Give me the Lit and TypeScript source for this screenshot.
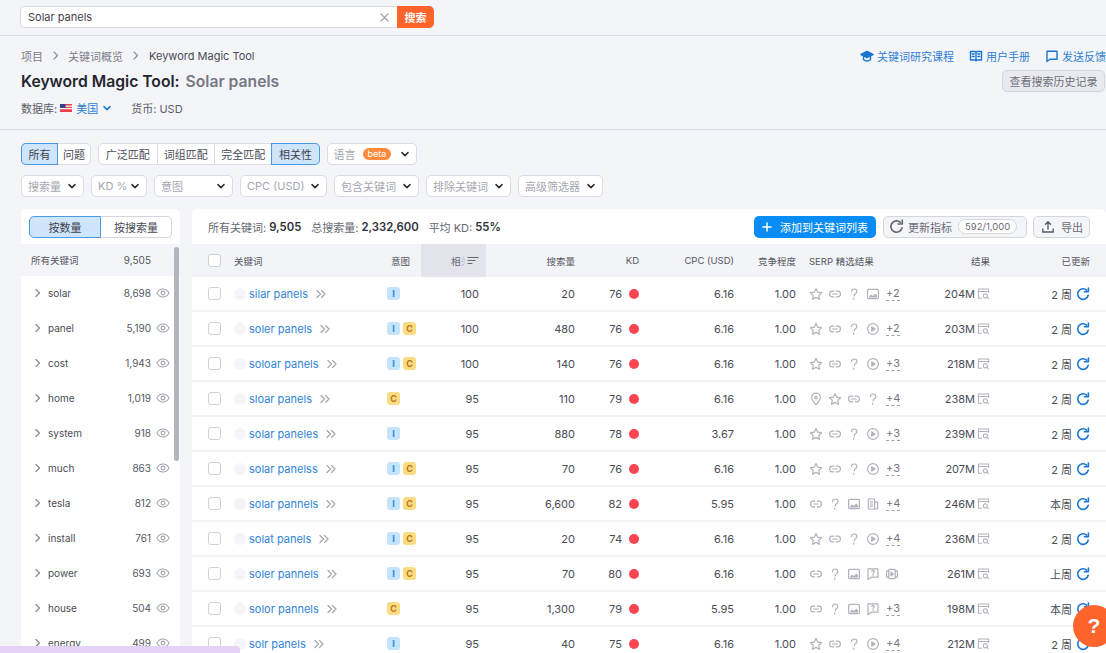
import { LitElement, html, css, svg, nothing } from "lit";
import { customElement } from "lit/decorators.js";

const ICONS: Record<string, unknown> = {
  star: svg`<path d="M7 1.600l1.700 3.600 3.900.5-2.900 2.700.8 3.900L7 10.400l-3.500 1.900.8-3.900L1.400 5.700l3.900-.5z"/>`,
  link: svg`<path d="M5.800 4.200H4.400a2.800 2.800 0 000 5.600h1.400M8.200 4.200h1.400a2.800 2.800 0 010 5.600H8.200M4.600 7h4.800"/>`,
  q: svg`<path d="M4.400 4.600C4.600 3 5.700 2 7.200 2c1.600 0 2.700 1 2.700 2.400 0 1.200-.7 1.800-1.500 2.400-.8.600-1.200 1.100-1.200 2.200M6.700 11.200v1"/>`,
  image: svg`<rect x="1.600" y="2.400" width="10.800" height="9.200" rx="1"/><path d="M3 10.400h8V8.400L9.200 6.600 7 9 5 7.600 3 9.400z" fill="#b0b2bc" stroke="none"/>`,
  play: svg`<circle cx="7" cy="7" r="5.400"/><path d="M5.800 4.900L9 7l-3.200 2.100z" fill="#b0b2bc"/>`,
  pin: svg`<path d="M7 12.800C5 10.500 2.600 8.200 2.600 5.600a4.400 4.400 0 018.800 0c0 2.600-2.400 4.900-4.400 7.200z"/><circle cx="7" cy="5.600" r="1.300"/>`,
  doc: svg`<path d="M2.400 2h6.200v10H3.400a1 1 0 01-1-1zM8.600 5.200h3v5.800a1 1 0 01-1 1H8.600M4.400 4.800h2.200M4.400 7h2.200M4.400 9.200h2.200"/>`,
  chat: svg`<path d="M2 1.800h10v8.400H5.200L2 12.600z"/><path d="M5.800 4.400c.2-.6.7-1 1.300-1 .7 0 1.200.4 1.200 1 0 .9-1.200 1-1.200 2M7.100 7.600v.7"/>`,
  video: svg`<rect x="3.800" y="2.400" width="6.400" height="9.200" rx="1"/><path d="M3.800 3.600H2.600a1 1 0 00-1 1v4.800a1 1 0 001 1h1.200M10.200 3.600h1.200a1 1 0 011 1v4.800a1 1 0 01-1 1h-1.200"/><path d="M6 5.200L8.400 7 6 8.800z" fill="#b0b2bc"/>`,
};

const serpIcon = (n: string) =>
  html`<svg class="si" viewBox="0 0 14 14">${ICONS[n]}</svg>`;

const refresh = (cls: string) => html`<svg class=${cls} viewBox="0 0 14 14"><path d="M12.200 8.200A5.300 5.300 0 1110.600 3.100"/><path d="M8.400 4.700h4V1"/></svg>`;
const chev = (cls = "chev") => html`<svg class=${cls} viewBox="0 0 10 10"><path d="M2 3.600L5 6.600l3-3"/></svg>`;
const eye = () => html`<svg class="eye" viewBox="0 0 14 14"><path d="M.9 7C2.400 4.400 4.500 3 7 3s4.600 1.400 6.100 4C11.600 9.600 9.500 11 7 11S2.400 9.600.9 7z"/><circle cx="7" cy="7" r="1.900"/></svg>`;

interface Row { k: string; i: string; rel: number; vol: string; kd: number; cpc: string; serp: string[]; more: string; res: string; up: string; }

const ROWS: Row[] = [
  { k: "silar panels", i: "I", rel: 100, vol: "20", kd: 76, cpc: "6.16", serp: ["star", "link", "q", "image"], more: "+2", res: "204M", up: "2 周" },
  { k: "soler panels", i: "IC", rel: 100, vol: "480", kd: 76, cpc: "6.16", serp: ["star", "link", "q", "play"], more: "+2", res: "203M", up: "2 周" },
  { k: "soloar panels", i: "IC", rel: 100, vol: "140", kd: 76, cpc: "6.16", serp: ["star", "link", "q", "play"], more: "+3", res: "218M", up: "2 周" },
  { k: "sloar panels", i: "C", rel: 95, vol: "110", kd: 79, cpc: "6.16", serp: ["pin", "star", "link", "q"], more: "+4", res: "238M", up: "2 周" },
  { k: "solar paneles", i: "I", rel: 95, vol: "880", kd: 78, cpc: "3.67", serp: ["star", "link", "q", "play"], more: "+3", res: "239M", up: "2 周" },
  { k: "solar panelss", i: "IC", rel: 95, vol: "70", kd: 76, cpc: "6.16", serp: ["star", "link", "q", "play"], more: "+3", res: "207M", up: "2 周" },
  { k: "solar pannels", i: "IC", rel: 95, vol: "6,600", kd: 82, cpc: "5.95", serp: ["link", "q", "image", "doc"], more: "+4", res: "246M", up: "本周" },
  { k: "solat panels", i: "IC", rel: 95, vol: "20", kd: 74, cpc: "6.16", serp: ["star", "link", "q", "play"], more: "+4", res: "236M", up: "2 周" },
  { k: "soler pannels", i: "IC", rel: 95, vol: "70", kd: 80, cpc: "6.16", serp: ["link", "q", "image", "chat", "video"], more: "", res: "261M", up: "上周" },
  { k: "solor pannels", i: "C", rel: 95, vol: "1,300", kd: 79, cpc: "5.95", serp: ["link", "q", "image", "chat"], more: "+3", res: "198M", up: "本周" },
  { k: "solr panels", i: "I", rel: 95, vol: "40", kd: 75, cpc: "6.16", serp: ["star", "link", "q", "play"], more: "+4", res: "212M", up: "2 周" },
];

const GROUPS: [string, string][] = [
  ["solar", "8,698"], ["panel", "5,190"], ["cost", "1,943"], ["home", "1,019"], ["system", "918"], ["much", "863"],
  ["tesla", "812"], ["install", "761"], ["power", "693"], ["house", "504"], ["energy", "499"],
];

const FILTERS: [string, number][] = [
  ["搜索量", 63], ["KD %", 56], ["意图", 79], ["CPC (USD)", 87], ["包含关键词", 85], ["排除关键词", 85], ["高级筛选器", 85],
];

@customElement("app-root")
export class AppRoot extends LitElement {
  static styles = css`
    :host {
      display: block; position: relative; height: 653px; overflow: hidden;
      background: #f4f5f9; color: #3f414b;
      font-family: Inter, "Noto Sans CJK SC", sans-serif; font-size: 11px;
    }
    svg { display: block; flex: none; fill: none; stroke-linecap: round; stroke-linejoin: round; }

    .top { height: 36px; box-sizing: border-box; padding: 6px 0 0 20px; border-bottom: 1px solid #dfe0e6; display: flex; align-items: flex-start; }
    .search { width: 377px; height: 22px; box-sizing: border-box; background: #fff; border: 1px solid #d9dae1; border-right: 0; border-radius: 5px 0 0 5px; display: flex; align-items: center; justify-content: space-between; padding: 0 8px 0 7px; font-size: 11px; color: #3f414b; }
    .x { width: 9px; height: 9px; stroke: #9a9ca6; stroke-width: 1.400; }
    .go { width: 37px; height: 22px; background: #ff642d; color: #fff; border-radius: 0 5px 5px 0; display: flex; align-items: center; justify-content: center; font-weight: 600; font-size: 11px; }

    .head { height: 94px; box-sizing: border-box; border-bottom: 1px solid #dcdde3; padding: 12px 0 0 21px; display: flex; justify-content: space-between; }
    .crumbs { display: flex; align-items: center; gap: 9px; height: 15px; color: #7d7f8a; font-size: 11px; }
    .crumbs b { font-weight: 400; color: #4a4c56; margin-left: 1px; }
    .sep { width: 7px; height: 9px; stroke: #8b8d97; stroke-width: 1.100; }
    h1 { margin: 9px 0 0; font-size: 15.700px; font-weight: 600; line-height: 20px; color: #24262e; display: flex; gap: 6px; }
    h1 span { color: #767883; }
    .db { margin-top: 8px; display: flex; align-items: center; height: 15px; font-size: 11px; color: #5a5c66; }
    .flag { width: 12px; height: 8px; margin: 0 4px 0 3px; }
    .db a { color: #2b7fd3; }
    .blue-chev { width: 10px; height: 10px; stroke: #1a76d2; stroke-width: 1.500; margin: 0 19px 0 4px; }
    .hr { display: flex; flex-direction: column; align-items: flex-end; }
    .links { display: flex; height: 15px; align-items: center; font-size: 11px; color: #2e80d2; }
    .links span { display: flex; align-items: center; gap: 3px; margin-left: 15px; white-space: nowrap; }
    .li { width: 14px; height: 14px; stroke: #1a76d2; stroke-width: 1.400; }
    .hist { margin: 7px 1px 0 0; width: 103px; height: 22px; box-sizing: border-box; border: 1px solid #d5d6dd; border-radius: 5px; background: #e9eaef; color: #6c6e79; display: flex; align-items: center; justify-content: center; font-size: 11px; }

    .filters { padding: 13px 0 12px 21px; display: flex; flex-direction: column; gap: 10px; }
    .fr { display: flex; height: 22px; }
    .seg { display: flex; background: #fff; border: 1px solid #dcdde3; border-radius: 5px; box-sizing: border-box; margin-right: 7px; }
    .seg span { display: flex; align-items: center; justify-content: center; box-sizing: border-box; border-left: 1px solid #dcdde3; font-size: 11px; color: #4a4c56; }
    .seg span:first-child { border-left: 0; border-radius: 4px 0 0 4px; }
    .seg span:last-child { border-radius: 0 4px 4px 0; }
    .seg span.on { background: #cfe5fb; box-shadow: 0 0 0 1px #4a9ae3; position: relative; color: #3f414b; }
    .w35 { width: 35px; } .w34 { width: 33px; } .w58 { width: 57.500px; } .w47 { width: 47px; }
    .dd { height: 22px; box-sizing: border-box; background: #fff; border: 1px solid #dcdde3; border-radius: 5px; display: flex; align-items: center; justify-content: space-between; padding: 0 6px; color: #a5a7b1; font-size: 11px; margin-right: 7px; white-space: nowrap; }
    .dd svg { width: 10px; height: 10px; stroke: #2a2c34; stroke-width: 1.500; }
    .w90 { width: 90px; }
    .beta { background: #ff8a3c; color: #fff; border-radius: 7px; padding: 0 5px; font-size: 9px; line-height: 12px; margin-left: 7px; margin-right: auto; }

    .main { display: grid; grid-template-columns: 159px 914px; column-gap: 12px; padding-left: 21px; }
    .side { background: #fff; border-radius: 5px 5px 0 0; position: relative; height: 444px; overflow: hidden; }
    .tog { display: flex; padding: 7px 8px 6px; }
    .tog span { flex: 1; height: 22px; box-sizing: border-box; display: flex; align-items: center; justify-content: center; font-size: 11px; border: 1px solid #d5d6dd; color: #4a4c56; }
    .tog span:first-child { background: #cfe5fb; border-color: #4a9ae3; border-radius: 5px 0 0 5px; color: #3f414b; }
    .tog span:last-child { border-left: 0; border-radius: 0 5px 5px 0; }
    .sh, .sr { display: grid; grid-template-columns: 1fr 40px; align-items: center; padding-right: 29px; font-size: 10px; }
    .sh { height: 32px; background: #f4f5f9; padding-left: 10px; color: #55575f; font-size: 9.500px; margin-bottom: -1px; }
    .sh b, .sr b { font-weight: 400; text-align: right; font-size: 10px; color: #55575f; }
    .sr { height: 35px; padding-left: 12px; grid-template-columns: 15px 1fr 40px; position: relative; color: #4a4c56; }
    .sc { width: 9px; height: 10px; stroke: #8b8d97; stroke-width: 1.300; }
    .eye { position: absolute; right: 10px; top: 11px; width: 14px; height: 14px; stroke: #a3a5af; stroke-width: 1.100; }
    .thumb { position: absolute; left: 153px; top: 38px; width: 5px; height: 214px; background: #b4b5bb; border-radius: 3px; }

    .panel { background: #fff; border-radius: 5px 5px 0 0; height: 444px; overflow: hidden; }
    .sum { height: 35px; display: flex; align-items: center; padding: 0 16px; font-size: 11px; color: #666873; }
    .sum b { color: #2f3139; font-weight: 600; font-size: 11.300px; margin: 0 10px 0 3px; }
    .sum .gap { flex: 1; }
    .add { width: 122px; height: 22px; background: #0a8cf5; color: #fff; border-radius: 5px; display: flex; align-items: center; justify-content: center; gap: 8px; font-size: 11px; }
    .add svg { width: 10px; height: 10px; stroke: #fff; stroke-width: 1.500; }
    .btn { height: 22px; box-sizing: border-box; margin-left: 7px; border: 1px solid #d5d6dd; border-radius: 5px; background: #f4f5f8; display: flex; align-items: center; font-size: 11px; color: #6c6e79; }
    .b1 { width: 144px; padding-left: 5px; gap: 4px; }
    .b1 .r { width: 15px; height: 15px; stroke: #666873; stroke-width: 1.500; }
    .pill { background: #fff; border: 1px solid #d5d6dd; border-radius: 8px; padding: 0 6px; line-height: 13px; font-size: 9.500px; margin-left: 2px; }
    .b2 { width: 57px; margin-left: 6px; padding-left: 7px; gap: 6px; }
    .b2 svg { width: 14px; height: 14px; stroke: #555761; stroke-width: 1.300; }

    .grid { display: grid; grid-template-columns: 42px 153px 34px 65px 89px 64px 95px 62px 109px 85px 100px 16px; align-items: center; }
    .th { height: 33px; background: #f3f4f8; font-size: 9.500px; color: #55575f; box-sizing: border-box; }
    .row { height: 35px; box-sizing: border-box; border-bottom: 2px solid #f1f2f6; font-size: 11px; color: #4a4c56; }
    .n { text-align: right; }
    .hd-r { padding-left: 4px; }
    .sel { background: #e3e4eb; height: 33px; display: flex; align-items: center; justify-content: flex-end; padding-right: 7px; box-sizing: border-box; color: #666873; }
    .sel i { font-style: normal; color: #9a9ca6; margin-right: -3px; -webkit-mask-image: linear-gradient(90deg, #000, transparent 60%); mask-image: linear-gradient(90deg, #000, transparent 60%); }
    .sel svg { width: 12px; height: 11px; stroke: #666873; stroke-width: 1.200; }
    .rel { padding-right: 7px; }
    .cb { width: 13px; height: 13px; box-sizing: border-box; border: 1px solid #cfd0d8; border-radius: 3px; background: #fff; margin-left: 16px; }
    .kw { display: flex; align-items: center; min-width: 0; white-space: nowrap; }
    .bub { width: 12px; height: 12px; border-radius: 50%; background: #f4f5f8; margin-right: 3px; flex: none; }
    .kw a { color: #2f84d6; }
    .dbl { width: 12px; height: 10px; margin-left: 7px; stroke: #a3a5af; stroke-width: 1.200; }
    .int { display: flex; gap: 3px; }
    .tag { width: 13px; height: 13px; border-radius: 3px; display: flex; align-items: center; justify-content: center; font-size: 9px; font-weight: 700; }
    .tag.I { background: #c5e4fb; color: #2a8bd8; }
    .tag.C { background: #fbdc85; color: #b8791a; }
    .kd { display: flex; align-items: center; justify-content: flex-end; gap: 7px; }
    .dot { width: 10px; height: 10px; border-radius: 50%; background: #fb4550; }
    .serp { display: flex; align-items: center; gap: 5px; padding-left: 13px; }
    .si { width: 14px; height: 14px; stroke: #b0b2bc; stroke-width: 1.200; }
    .more { border-bottom: 1px dashed #9fa1ab; color: #74767f; font-size: 11px; line-height: 13px; margin-left: 1px; }
    .hd-l { padding-left: 13px; white-space: nowrap; }
    .res { display: flex; align-items: center; justify-content: flex-end; gap: 2px; }
    .ri { width: 13px; height: 13px; stroke: #b0b2bc; stroke-width: 1.100; }
    .up { display: flex; align-items: center; justify-content: flex-end; gap: 4px; white-space: nowrap; }
    .up .r { width: 14px; height: 14px; stroke: #1a76d2; stroke-width: 1.600; }

    .promo { position: absolute; left: 0; bottom: -4px; width: 240px; height: 11px; background: #e3d2f6; border-radius: 0 4px 0 0; }
    .help { position: absolute; left: 1073px; top: 605px; width: 42px; height: 42px; border-radius: 50%; background: #ff642d; color: #fff; display: flex; align-items: center; justify-content: center; font: 700 21px "Liberation Sans", sans-serif; }
  `;

  render() {
    return html`
      <div class="top">
        <div class="search"><span>Solar panels</span><svg class="x" viewBox="0 0 10 10"><path d="M1 1l8 8M9 1l-8 8"/></svg></div>
        <div class="go">搜索</div>
      </div>
      <div class="head">
        <div>
          <div class="crumbs">项目<svg class="sep" viewBox="0 0 7 9"><path d="M2 1l3.500 3.500L2 8"/></svg>关键词概览<svg class="sep" viewBox="0 0 7 9"><path d="M2 1l3.500 3.500L2 8"/></svg><b>Keyword Magic Tool</b></div>
          <h1>Keyword Magic Tool: <span>Solar panels</span></h1>
          <div class="db">数据库:<svg class="flag" viewBox="0 0 12 8"><rect width="12" height="8" fill="#e8424f"/><rect y="1.600" width="12" height="1.200" fill="#fff"/><rect y="4" width="12" height="1.200" fill="#fff"/><rect width="5.500" height="4" fill="#33418c"/></svg><a>美国</a><svg class="blue-chev" viewBox="0 0 10 10"><path d="M2 3.600L5 6.600l3-3"/></svg>货币: USD</div>
        </div>
        <div class="hr">
          <div class="links">
            <span><svg class="li" viewBox="0 0 14 14"><path d="M1 5.500L7 2.500l6 3-6 3z" fill="#1a76d2"/><path d="M3.500 7.500v3C4.500 11.500 5.700 12 7 12s2.500-.5 3.500-1.500v-3"/></svg>关键词研究课程</span>
            <span><svg class="li" viewBox="0 0 14 14"><path d="M1.500 2.500H6c.5 0 1 .4 1 1 0-.6.500-1 1-1h4.500v8.500H8c-.5 0-1 .4-1 1 0-.6-.5-1-1-1H1.500zM7 3.500V12M3.300 5h1.900M3.300 7.500h1.900M8.800 5h1.900M8.800 7.500h1.900"/></svg>用户手册</span>
            <span><svg class="li" viewBox="0 0 14 14"><path d="M2 2.200h10v8H5l-3 2.300z"/></svg>发送反馈</span>
          </div>
          <div class="hist">查看搜索历史记录</div>
        </div>
      </div>
      <div class="filters">
        <div class="fr">
          <div class="seg"><span class="on w35">所有</span><span class="w34">问题</span></div>
          <div class="seg"><span class="w58">广泛匹配</span><span class="w58">词组匹配</span><span class="w58">完全匹配</span><span class="on w47">相关性</span></div>
          <div class="dd w90">语言<span class="beta">beta</span>${chev("")}</div>
        </div>
        <div class="fr">
          ${FILTERS.map(([t, w]) => html`<div class="dd" style="width:${w}px">${t}${chev("")}</div>`)}
        </div>
      </div>
      <div class="main">
        <div class="side">
          <div class="tog"><span>按数量</span><span>按搜索量</span></div>
          <div class="sh"><span>所有关键词</span><b>9,505</b></div>
          ${GROUPS.map(([n, c]) => html`<div class="sr"><svg class="sc" viewBox="0 0 9 10"><path d="M3 1.500L6.500 5 3 8.500"/></svg><span>${n}</span><b>${c}</b>${eye()}</div>`)}
          <div class="thumb"></div>
        </div>
        <div class="panel">
          <div class="sum">所有关键词: <b>9,505</b>总搜索量: <b>2,332,600</b>平均 KD: <b>55%</b>
            <span class="gap"></span>
            <div class="add"><svg viewBox="0 0 10 10"><path d="M5 1v8M1 5h8"/></svg>添加到关键词列表</div>
            <div class="btn b1">${refresh("r")}更新指标<span class="pill">592/1,000</span></div>
            <div class="btn b2"><svg viewBox="0 0 14 14"><path d="M7 9V2M4.500 4.300L7 1.800l2.500 2.500M1.800 9v3h10.400V9"/></svg>导出</div>
          </div>
          <div class="grid th">
            <div class="cb"></div><div>关键词</div><div class="hd-r">意图</div>
            <div class="sel">相<i>关</i><svg viewBox="0 0 12 11"><path d="M1 2.500h10M1 5.500h7M1 8.500h4"/></svg></div>
            <div class="n">搜索量</div><div class="n">KD</div><div class="n">CPC (USD)</div><div class="n">竞争程度</div>
            <div class="hd-l">SERP 精选结果</div><div class="n">结果</div><div class="n">已更新</div><div></div>
          </div>
          ${ROWS.map((r) => html`
            <div class="grid row">
              <div class="cb"></div>
              <div class="kw"><span class="bub"></span><a>${r.k}</a><svg class="dbl" viewBox="0 0 12 10"><path d="M2 1.500L5.500 5 2 8.500M6.500 1.500L10 5 6.500 8.500"/></svg></div>
              <div class="int">${[...r.i].map((c) => html`<span class="tag ${c}">${c}</span>`)}</div>
              <div class="n rel">${r.rel}</div>
              <div class="n">${r.vol}</div>
              <div class="kd">${r.kd}<span class="dot"></span></div>
              <div class="n">${r.cpc}</div>
              <div class="n">1.00</div>
              <div class="serp">${r.serp.map(serpIcon)}${r.more ? html`<span class="more">${r.more}</span>` : nothing}</div>
              <div class="res">${r.res}<svg class="ri" viewBox="0 0 14 14"><path d="M5 12H1.500V2.200h11V6M1.500 4.800h11"/><circle cx="9" cy="9.500" r="2.200"/><path d="M10.700 11.200l1.800 1.300"/></svg></div>
              <div class="up">${r.up}${refresh("r")}</div>
              <div></div>
            </div>`)}
        </div>
      </div>
      <div class="promo"></div>
      <div class="help">?</div>
    `;
  }
}
